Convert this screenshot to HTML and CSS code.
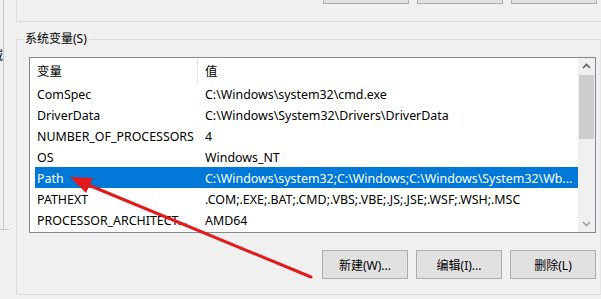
FILE: index.html
```html
<!DOCTYPE html>
<html lang="zh-CN">
<head>
    <meta charset="UTF-8">
    <meta name="viewport" content="width=device-width, initial-scale=1.0">
    <title>环境变量</title>
    <link rel="stylesheet" href="styles.css">
</head>
<body>
    <div class="window">
        <div class="side">
            <div class="side-line">
                <div class="cut"><span>域</span></div>
            </div>
            <div class="side-foot"></div>
        </div>

        <div class="main">
            <div class="user-group">
                <!-- only the bottom edge of these buttons is visible -->
                <div class="btn-row top-btns">
                    <button class="btn" aria-label="新建(N)..."></button>
                    <button class="btn" aria-label="编辑(E)..."></button>
                    <button class="btn" aria-label="删除(D)"></button>
                </div>
            </div>

            <fieldset class="sys-group">
                <legend>系统变量(S)</legend>

                <div class="listbox">
                    <div class="list">
                        <div class="list-head">
                            <div class="head-name">变量</div>
                            <div class="head-value">值</div>
                        </div>
                        <div class="row"><span class="name">ComSpec</span><span class="value">C:\Windows\system32\cmd.exe</span></div>
                        <div class="row"><span class="name">DriverData</span><span class="value">C:\Windows\System32\Drivers\DriverData</span></div>
                        <div class="row"><span class="name">NUMBER_OF_PROCESSORS</span><span class="value">4</span></div>
                        <div class="row"><span class="name">OS</span><span class="value">Windows_NT</span></div>
                        <div class="row selected"><span class="name">Path</span><span class="value">C:\Windows\system32;C:\Windows;C:\Windows\System32\Wb...</span></div>
                        <div class="row"><span class="name">PATHEXT</span><span class="value">.COM;.EXE;.BAT;.CMD;.VBS;.VBE;.JS;.JSE;.WSF;.WSH;.MSC</span></div>
                        <div class="row"><span class="name">PROCESSOR_ARCHITECT...</span><span class="value">AMD64</span></div>
                    </div>
                    <div class="scrollbar">
                        <svg class="sb-arrow" width="17" height="17" viewBox="0 0 17 17">
                            <path d="M5 10 L8.5 6.5 L12 10" fill="none" stroke="#606060" stroke-width="1.6"/>
                        </svg>
                        <div class="sb-thumb"></div>
                        <div class="sb-track"></div>
                        <svg class="sb-arrow" width="17" height="17" viewBox="0 0 17 17">
                            <path d="M5 7 L8.5 10.5 L12 7" fill="none" stroke="#a0a0a0" stroke-width="1.6"/>
                        </svg>
                    </div>
                </div>

                <div class="btn-row bottom-btns">
                    <button class="btn">新建(W)...</button>
                    <button class="btn">编辑(I)...</button>
                    <button class="btn">删除(L)</button>
                </div>
            </fieldset>
        </div>

        <!-- annotation arrow drawn over the dialog -->
        <svg class="annot" width="601" height="299" viewBox="0 0 601 299">
            <line x1="311" y1="277" x2="86" y2="184" stroke="#e3191c" stroke-width="3" stroke-linecap="round"/>
            <polygon points="70,177 93,178 86,193" fill="#e3191c"/>
        </svg>
    </div>
</body>
</html>
```

FILE: styles.css
```css
* {
    box-sizing: border-box;
}
body {
    margin: 0;
    background: #f0f0f0;
    font-family: "Noto Sans", "Noto Sans CJK SC", sans-serif;
    font-size: 12px;
    color: #000;
}
.window {
    position: relative;
    width: 601px;
    height: 299px;
    overflow: hidden;
    display: flex;
}
.side {
    width: 4px;
    flex: none;
}
.side-line {
    height: 229px;
    border-right: 1px solid #c8c8c8;
    padding-top: 48px;
}
.cut {
    width: 3px;
    overflow: hidden;
    line-height: 16px;
}
.cut span {
    display: block;
    margin-left: -9px;
}
.side-foot {
    width: 9px;
    border-top: 1px solid #c8c8c8;
}
.main {
    flex: 1;
    margin-left: 12px;
}
.user-group {
    display: flow-root;
    height: 22px;
    border-left: 1px solid #dcdcdc;
    border-bottom: 1px solid #dcdcdc;
}
.btn-row {
    display: flex;
    justify-content: flex-end;
    gap: 8px;
    padding-right: 4px;
}
.top-btns {
    margin-top: -25px;
}
.btn {
    width: 86px;
    height: 29px;
    background: #e1e1e1;
    border: 1px solid #adadad;
    font-family: inherit;
    font-size: 12px;
    color: #000;
    padding: 0;
}
.sys-group {
    margin: 9px 0 0 0;
    padding: 0 0 14px 12px;
    border: 1px solid #dcdcdc;
    border-right-color: #e6e6e6;
    height: 264px;
}
.sys-group legend {
    margin-left: -6px;
    padding: 0 2px;
    line-height: 16px;
}
.listbox {
    margin-top: 10px;
    width: 567px;
    height: 176px;
    border: 1px solid #828790;
    background: #fff;
    display: flex;
    font-size: 12.4px;
}
.list {
    flex: 1;
}
.list-head {
    display: flex;
    height: 25px;
    padding-top: 2px;
    line-height: 23px;
}
.head-name {
    width: 168px;
    padding-left: 7px;
    border-right: 1px solid #e5e5e5;
    margin-top: -2px;
    padding-top: 2px;
}
.head-value {
    padding-left: 7px;
}
.row {
    display: flex;
    height: 21px;
    padding-top: 2px;
    line-height: 19px;
    margin-left: 5px;
    white-space: nowrap;
}
.row .name {
    width: 170px;
    padding-left: 2px;
    flex: none;
}
.row .value {
    flex: 1;
}
.row.selected {
    background: #0078d7;
    color: #fff;
}
.scrollbar {
    width: 17px;
    background: #f0f0f0;
    display: flex;
    flex-direction: column;
}
.sb-arrow {
    display: block;
    flex: none;
}
.sb-thumb {
    height: 64px;
    margin: 0 1px;
    background: #cdcdcd;
}
.sb-track {
    flex: 1;
}
.bottom-btns {
    margin-top: 17px;
}
.annot {
    position: absolute;
    left: 0;
    top: 0;
    pointer-events: none;
}
```
